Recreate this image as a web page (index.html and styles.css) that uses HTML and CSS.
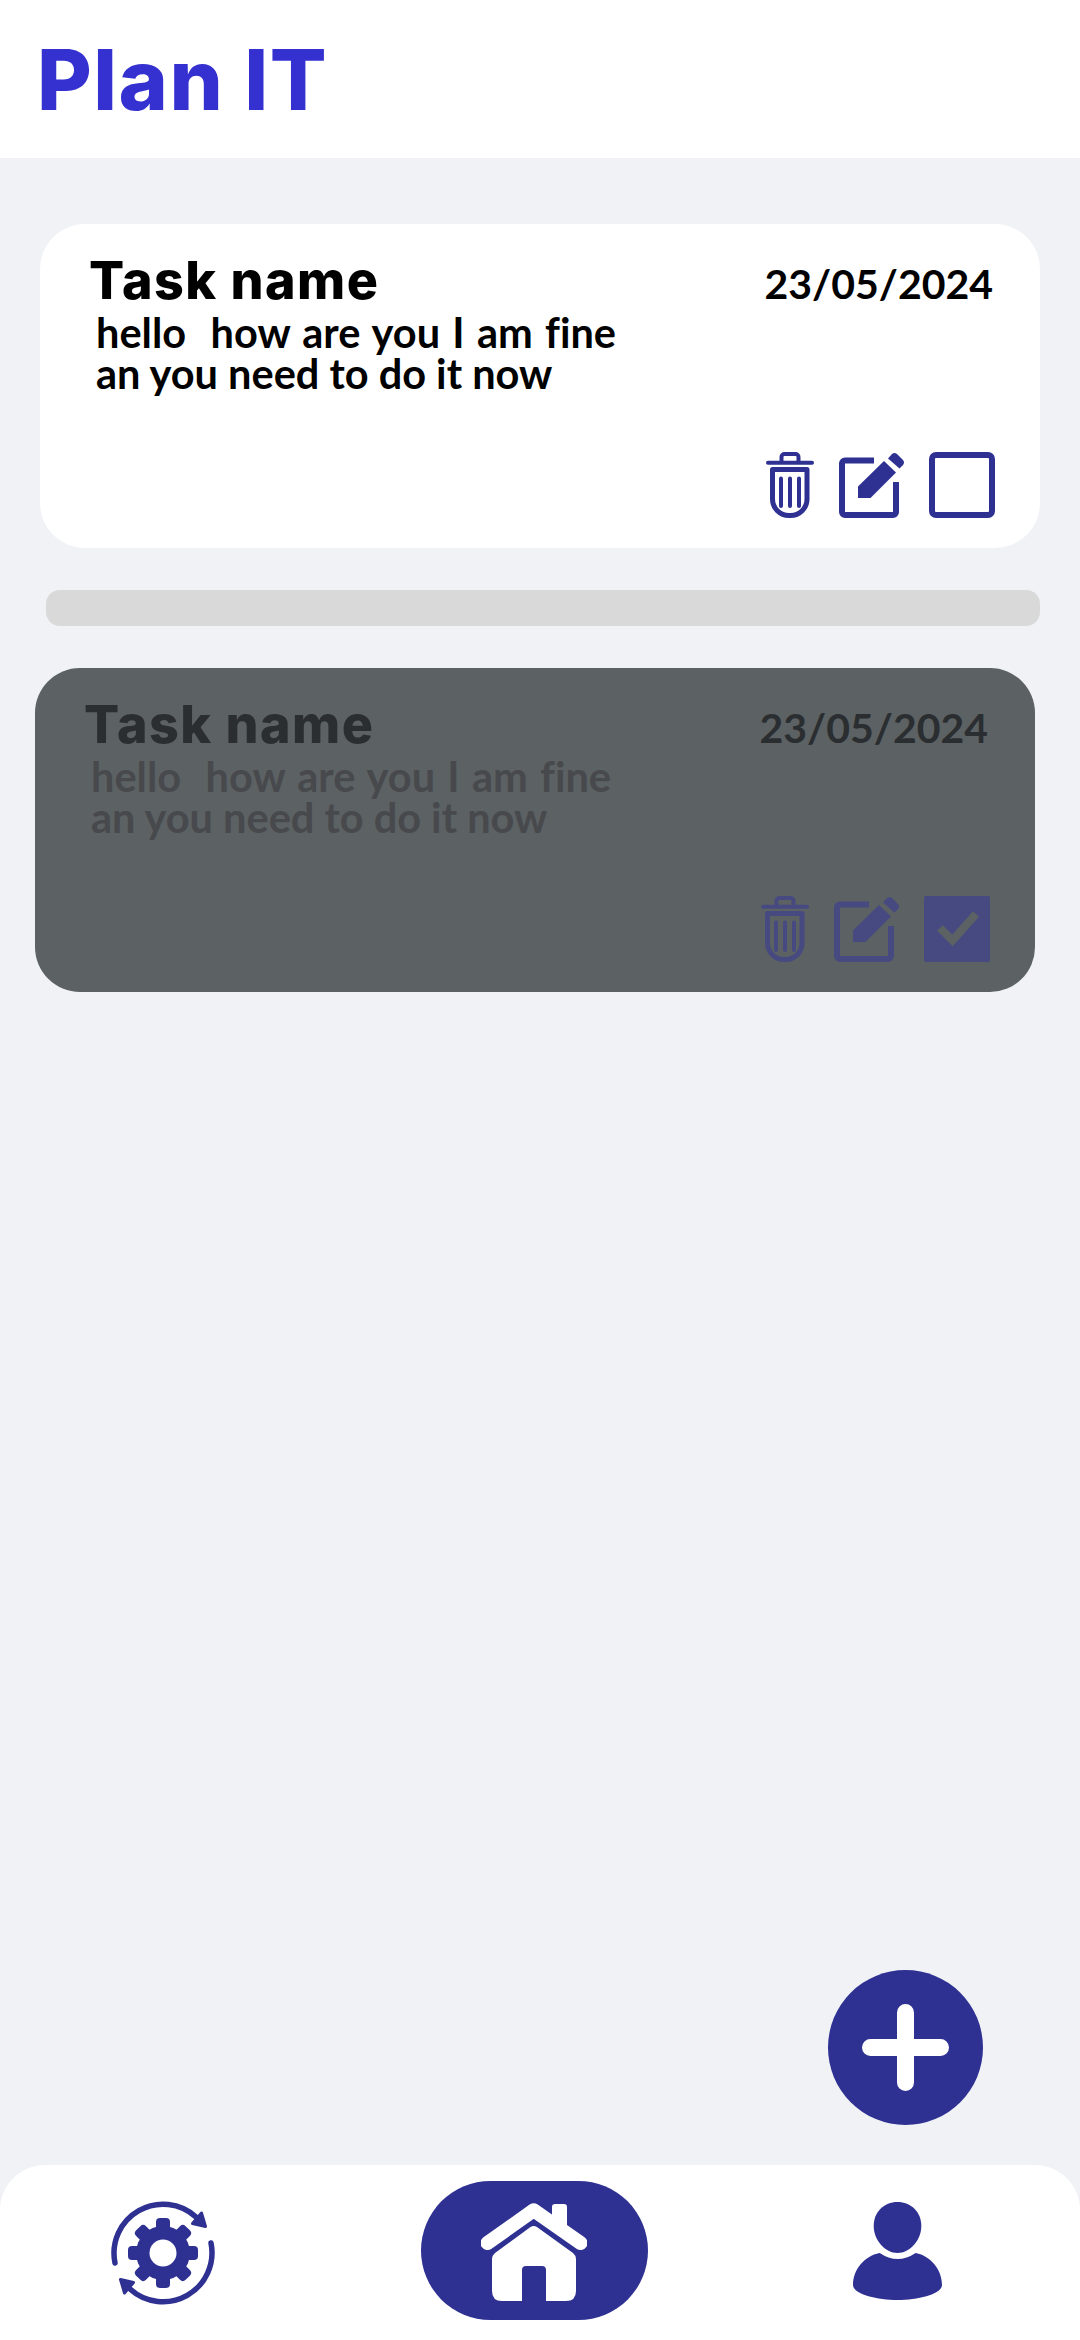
FILE: index.html
```html
<!DOCTYPE html>
<html lang="en">
<head>
    <meta charset="UTF-8">
    <meta name="viewport" content="width=device-width, initial-scale=1.0">
    <title>Plan IT</title>
    <link rel="stylesheet" href="styles.css">
</head>
<body>
    <svg class="sprites" width="0" height="0">
        <symbol id="icon-trash" viewBox="0 0 48 66">
            <rect x="0" y="8.7" width="48" height="4" rx="2" fill="currentColor"/>
            <path d="M15.5 9V5a3 3 0 0 1 3-3h11a3 3 0 0 1 3 3v4" fill="none" stroke="currentColor" stroke-width="4"/>
            <path d="M6.5 17.500H41V47a16.500 16.500 0 0 1-16.500 16.500h-1.500A16.500 16.500 0 0 1 6.500 47z" fill="none" stroke="currentColor" stroke-width="5" stroke-linejoin="round"/>
            <path d="M15 26.500V54M24 26.500V54M33 26.500V54" fill="none" stroke="currentColor" stroke-width="4" stroke-linecap="round"/>
        </symbol>
        <symbol id="icon-edit" viewBox="0 0 66 66">
            <path d="M35 8.500H6a3 3 0 0 0-3 3V60a3 3 0 0 0 3 3h48a3 3 0 0 0 3-3V30" fill="none" stroke="currentColor" stroke-width="6"/>
            <path d="M19 34.500 45 9 57 20.500 31.500 46H19z" fill="currentColor"/>
            <path d="M49 6.500 53 2q2.500-2 5 0l6 6q2 2.500 0 5l-3.500 3.500z" fill="currentColor"/>
        </symbol>
        <symbol id="icon-box" viewBox="0 0 66 66">
            <rect x="3" y="3" width="60" height="60" rx="4" fill="none" stroke="currentColor" stroke-width="6"/>
        </symbol>
        <symbol id="icon-box-checked" viewBox="0 0 66 66">
            <rect x="0" y="0" width="66" height="66" rx="2" fill="currentColor"/>
            <path d="M16 32 28.500 44.500 52 18" fill="none" stroke="#5c6163" stroke-width="8"/>
        </symbol>
    </svg>

    <header class="top-bar">
        <h1 class="app-title">Plan IT</h1>
    </header>

    <main class="content">
        <section class="task-card">
            <div class="task-head">
                <h2 class="task-name">Task name</h2>
                <span class="task-date">23/05/2024</span>
            </div>
            <p class="task-text"><span class="first-line">hello&nbsp; how are you I am fine</span><br>an you need to do it now</p>
            <div class="task-actions">
                <svg class="icon-trash"><use href="#icon-trash"/></svg>
                <svg class="icon-square"><use href="#icon-edit"/></svg>
                <svg class="icon-square"><use href="#icon-box"/></svg>
            </div>
        </section>

        <div class="divider"></div>

        <section class="task-card done">
            <div class="task-head">
                <h2 class="task-name">Task name</h2>
                <span class="task-date">23/05/2024</span>
            </div>
            <p class="task-text"><span class="first-line">hello&nbsp; how are you I am fine</span><br>an you need to do it now</p>
            <div class="task-actions">
                <svg class="icon-trash"><use href="#icon-trash"/></svg>
                <svg class="icon-square"><use href="#icon-edit"/></svg>
                <svg class="icon-square"><use href="#icon-box-checked"/></svg>
            </div>
        </section>

        <button class="add-btn" type="button" aria-label="Add task">
            <svg width="87" height="87" viewBox="0 0 87 87">
                <path d="M43.500 8.500V78.500M8.500 43.500H78.500" fill="none" stroke="#ffffff" stroke-width="17" stroke-linecap="round"/>
            </svg>
        </button>
    </main>

    <nav class="bottom-nav">
        <svg class="nav-gear" width="104" height="104" viewBox="0 0 104 104">
            <g fill="none" stroke="#2e3192" stroke-width="5.500" stroke-linecap="round">
                <path d="M4 62A49 49 0 0 1 85 16"/>
                <path d="M100 42A49 49 0 0 1 19 88"/>
            </g>
            <g fill="#2e3192" stroke="#2e3192" stroke-width="3" stroke-linejoin="round">
                <path d="M90.500 12 94.500 25.500 81.500 22.500z"/>
                <path d="M13.500 92 9.500 78.500 22.500 81.500z"/>
            </g>
            <g fill="#2e3192">
                <circle cx="52" cy="52" r="27"/>
                <rect x="45" y="17" width="14" height="18" rx="4"/>
                <rect x="45" y="17" width="14" height="18" rx="4" transform="rotate(45 52 52)"/>
                <rect x="45" y="17" width="14" height="18" rx="4" transform="rotate(90 52 52)"/>
                <rect x="45" y="17" width="14" height="18" rx="4" transform="rotate(135 52 52)"/>
                <rect x="45" y="17" width="14" height="18" rx="4" transform="rotate(180 52 52)"/>
                <rect x="45" y="17" width="14" height="18" rx="4" transform="rotate(225 52 52)"/>
                <rect x="45" y="17" width="14" height="18" rx="4" transform="rotate(270 52 52)"/>
                <rect x="45" y="17" width="14" height="18" rx="4" transform="rotate(315 52 52)"/>
            </g>
            <circle cx="52" cy="52" r="13.500" fill="#ffffff"/>
        </svg>

        <a class="nav-home" href="#" aria-label="Home">
            <svg width="106" height="100" viewBox="0 0 106 100">
                <path d="M71 23V6a3 3 0 0 1 3-3h9a3 3 0 0 1 3 3v20z" fill="#ffffff"/>
                <path d="M6.500 42 52.700 9.300 99.500 42" fill="none" stroke="#ffffff" stroke-width="14" stroke-linecap="round" stroke-linejoin="round"/>
                <path d="M49.500 26q3.200-2.200 6.400 0L92 52q3 2.500 3 6v32q0 10-10 10H65V69q0-4-4-4H45q-4 0-4 4v31H21q-10 0-10-10V58q0-3.500 3-6z" fill="#ffffff"/>
            </svg>
        </a>

        <svg class="nav-user" width="89" height="98" viewBox="0 0 89 98">
            <path d="M44.500 0C58 0 68.300 10 68.300 24 68.300 38 57 51 44.500 51 32 51 20.700 38 20.700 24 20.700 10 31 0 44.500 0z" fill="#2e3192"/>
            <path d="M26.700 51Q44.500 63 62.700 51C78 54 89 68 89 83 89 92 65 98 44.500 98 24 98 0 92 0 83 0 68 11 54 26.700 51z" fill="#2e3192"/>
        </svg>
    </nav>
</body>
</html>
```

FILE: styles.css
```css
* {
    box-sizing: border-box;
}
body {
    margin: 0;
    width: 1080px;
    height: 2340px;
    display: flex;
    flex-direction: column;
    overflow: hidden;
    background-color: #f0f2f6;
    font-family: "Lato", "Liberation Sans", sans-serif;
}
.sprites {
    display: block;
    position: absolute;
}
.top-bar {
    height: 158px;
    flex-shrink: 0;
    display: flex;
    align-items: center;
    padding: 2px 0 0 37px;
    background: #ffffff;
}
.app-title {
    margin: 0;
    font-family: "Inter", "Liberation Sans", sans-serif;
    font-size: 84px;
    font-weight: 800;
    letter-spacing: 1.500px;
    line-height: 1;
    color: #3431d0;
}
.content {
    flex: 1;
    position: relative;
    padding-top: 66px;
}
.task-card {
    width: 1000px;
    height: 324px;
    margin-left: 40px;
    padding: 30px 45px 30px 49px;
    display: flex;
    flex-direction: column;
    background: #ffffff;
    border-radius: 45px;
    color: #000000;
}
.task-head {
    display: flex;
    justify-content: space-between;
    align-items: center;
    padding-right: 2px;
}
.task-name {
    margin: -4px 0 0;
    font-family: "Inter", "Liberation Sans", sans-serif;
    font-size: 52px;
    font-weight: 800;
    letter-spacing: 1.500px;
    line-height: 54px;
}
.task-date {
    margin-top: 3px;
    font-size: 41px;
    font-weight: 700;
    line-height: 54px;
}
.task-text {
    margin: 1px 0 0 7px;
    font-size: 41.500px;
    font-weight: 700;
    font-variant-ligatures: none;
    line-height: 41px;
}
.first-line {
    word-spacing: 2.200px;
}
.task-actions {
    margin-top: auto;
    display: flex;
    justify-content: flex-end;
    align-items: center;
    gap: 24px;
    color: #2e3192;
}
.task-actions .icon-trash {
    margin-right: 1px;
}
.icon-trash {
    width: 48px;
    height: 66px;
}
.icon-square {
    width: 66px;
    height: 66px;
}
.divider {
    width: 994px;
    height: 36px;
    margin: 42px 0 42px 46px;
    background-color: #d9d9d9;
    border-radius: 14px;
}
.task-card.done {
    margin-left: 35px;
    background: #5c6163;
    color: #2b2e31;
}
.task-card.done .task-text {
    color: #47494d;
}
.task-card.done .task-actions {
    color: #474a80;
}
.add-btn {
    position: absolute;
    right: 97px;
    bottom: 40px;
    width: 155px;
    height: 155px;
    padding: 0;
    border: none;
    border-radius: 50%;
    display: flex;
    align-items: center;
    justify-content: center;
    background-color: #2e3192;
    cursor: pointer;
}
.bottom-nav {
    height: 175px;
    flex-shrink: 0;
    display: flex;
    justify-content: space-between;
    align-items: center;
    padding: 0 138px 4px 111px;
    background: #ffffff;
    border-radius: 45px 45px 0 0;
}
.nav-gear {
    margin-top: 5px;
}
.nav-home {
    width: 227px;
    height: 139px;
    display: flex;
    align-items: center;
    justify-content: center;
    background-color: #2e3192;
    border-radius: 70px;
}
```
